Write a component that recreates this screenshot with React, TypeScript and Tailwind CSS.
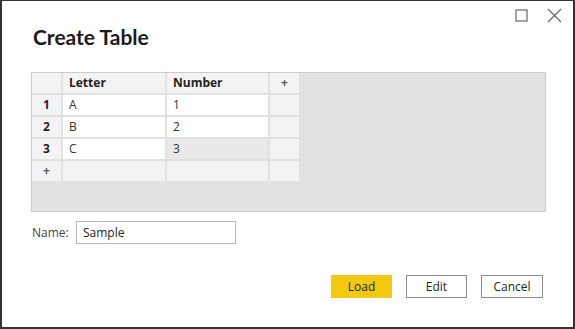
const font = { fontFamily: '"Open Sans", "Noto Sans", sans-serif' };
const titleFont = { fontFamily: 'Lato, "Open Sans", sans-serif' };

const rows = [
  { n: "1", letter: "A", number: "1" },
  { n: "2", letter: "B", number: "2" },
  { n: "3", letter: "C", number: "3" },
];

const cell = "h-[22px] border-r-2 border-b-2 border-[#e1e1e1]";

export default function App() {
  return (
    <div
      className="w-[575px] h-[329px] bg-white border-2 border-t border-[#333333] flex flex-col text-[#252423] relative"
      style={font}
    >
      {/* window controls */}
      <div className="absolute top-[7px] right-[11px] flex items-center gap-[19px]">
        <svg width="13" height="13" viewBox="0 0 13 13">
          <rect x="1" y="1" width="11" height="11" fill="none" stroke="#666" strokeWidth="1.2" />
        </svg>
        <svg width="15" height="15" viewBox="0 0 15 15">
          <path d="M1 1 L14 14 M14 1 L1 14" stroke="#666" strokeWidth="1.2" />
        </svg>
      </div>

      <h1 className="text-[21px] font-bold leading-none mt-[25px] ml-[31px] text-[#1b1b1b]" style={titleFont}>
        Create Table
      </h1>

      {/* grid area */}
      <div className="mt-[25px] ml-[29px] w-[515px] h-[140px] bg-[#e1e1e1] border border-[#cbcbcb] text-[12px]">
        <div className="grid grid-cols-[31px_104px_103px_31px] w-fit">
          <div className={cell + " bg-[#f3f3f3]"} />
          <div className={cell + " bg-[#f3f3f3] font-bold pl-[6px] flex items-center"}>Letter</div>
          <div className={cell + " bg-[#f3f3f3] font-bold pl-[6px] flex items-center"}>Number</div>
          <div className={cell + " bg-[#f3f3f3] flex items-center justify-center text-[12px] font-bold text-[#555]"}>+</div>
          {rows.map((r) => (
            <>
              <div key={r.n + "h"} className={cell + " bg-[#f3f3f3] font-bold flex items-center justify-center"}>
                {r.n}
              </div>
              <div className={cell + " bg-white pl-[6px] flex items-center text-[#333]"}>{r.letter}</div>
              <div
                className={
                  r.n === "3"
                    ? cell + " bg-[#e9e9e9] pl-[6px] flex items-center text-[#333]"
                    : cell + " bg-white pl-[6px] flex items-center text-[#333]"
                }
              >
                {r.number}
              </div>
              <div className={cell + " bg-[#f3f3f3]"} />
            </>
          ))}
          <div className={cell + " bg-[#f3f3f3] flex items-center justify-center text-[12px] font-bold text-[#555]"}>+</div>
          <div className={cell + " bg-[#f3f3f3]"} />
          <div className={cell + " bg-[#f3f3f3]"} />
          <div className={cell + " bg-[#f3f3f3]"} />
        </div>
      </div>

      {/* name */}
      <div className="flex items-center mt-[9px] ml-[30px] text-[12px]">
        <span className="text-[#444] w-[44px]">Name:</span>
        <div className="w-[160px] h-[23px] border border-[#b8b8b8] flex items-center pl-[6px] text-[#222]">
          Sample
        </div>
      </div>

      {/* buttons */}
      <div className="flex justify-end gap-[14px] mt-[31px] mr-[30px] text-[12px]">
        <button className="w-[61px] h-[23px] bg-[#f2c811] text-[#252423]">Load</button>
        <button className="w-[61px] h-[23px] border border-[#8a8a8a] bg-white text-[#252423]">Edit</button>
        <button className="w-[62px] h-[23px] border border-[#8a8a8a] bg-white text-[#252423]">Cancel</button>
      </div>
    </div>
  );
}
